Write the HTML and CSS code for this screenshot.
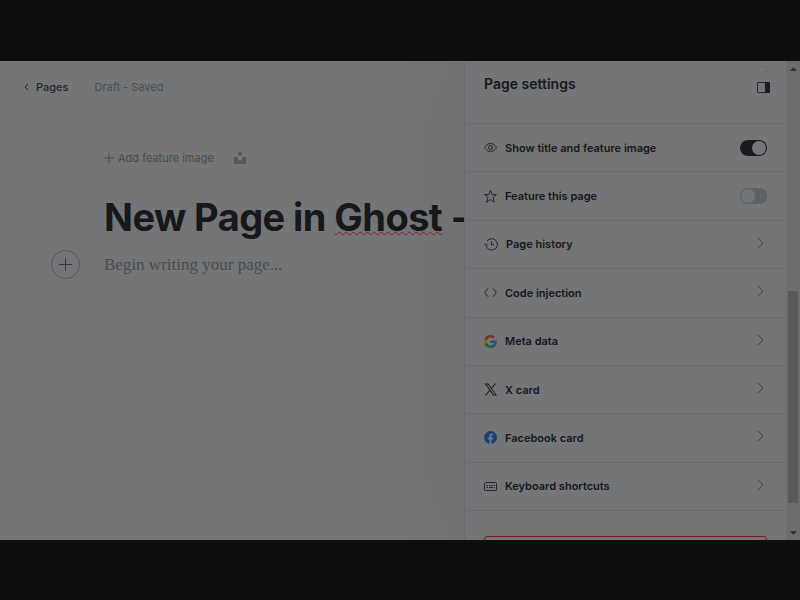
FILE: index.html
```html
<!DOCTYPE html>
<html lang="en">
<head>
<meta charset="utf-8">
<title>Page settings</title>
<link rel="stylesheet" href="styles.css">
</head>
<body>
<div class="app">
  <main class="editor">
    <header class="topbar">
      <a class="back" href="#"><svg width="5" height="8" viewBox="0 0 5 8"><path d="M4 1 1 4l3 3"/></svg>Pages</a>
      <span class="status">Draft - Saved</span>
    </header>
    <div class="canvas">
      <div class="feature">
        <button class="add-image" type="button"><svg width="10" height="10" viewBox="0 0 10 10"><path d="M5 0v10M0 5h10"/></svg>Add feature image</button>
        <button class="unsplash" type="button" aria-label="Unsplash"><svg width="12" height="12" viewBox="0 0 12 12"><path d="M4 0h4v3.500H4zM0 5h4v3.500h4V5h4v7H0z"/></svg></button>
      </div>
      <h1 class="title">New Page in <span class="misspelt">Ghost</span> -</h1>
      <div class="writer">
        <button class="plus" type="button" aria-label="Add a card"><svg width="13" height="13" viewBox="0 0 13 13"><path d="M6.500 0v13M0 6.500h13"/></svg></button>
        <input class="text" type="text" aria-label="Page content" placeholder="Begin writing your page...">
      </div>
    </div>
  </main>
  <aside class="panel">
    <header class="panel-head">
      <h2>Page settings</h2>
      <div class="panel-tools">
        <span class="corner"></span>
        <button class="sidebar-toggle" type="button" aria-label="Toggle settings"><svg width="13" height="11" viewBox="0 0 13 11"><rect x=".5" y=".5" width="12" height="10" rx=".5" fill="none" stroke="#27292c"/><path fill="#1b1d20" d="M8 0h5v11H8z"/></svg></button>
      </div>
    </header>
    <ul class="settings">
      <li><label class="row" for="show-title">
        <svg class="icon" viewBox="0 0 13 13"><path d="M.5 6.500C2 4 4 2.500 6.500 2.500S11 4 12.500 6.500C11 9 9 10.500 6.500 10.500S2 9 .5 6.500z"/><circle cx="6.500" cy="6.500" r="2"/><path d="M6.500 6.500h.8"/></svg>
        <span>Show title and feature image</span><input class="switch" id="show-title" type="checkbox" checked></label></li>
      <li><label class="row" for="feature">
        <svg class="icon" viewBox="0 0 13 13"><path d="m6.500.6 1.700 4h4.200L9.100 7.300l1.200 4.900-3.800-2.600-3.800 2.600 1.200-4.900L.6 4.600h4.200z"/></svg>
        <span>Feature this page</span><input class="switch" id="feature" type="checkbox"></label></li>
      <li><button class="row" type="button">
        <svg class="icon history" viewBox="0 0 14 13"><path d="M2.100 7.200A5.700 5.700 0 1 0 3 3.200M4.300 1.800l1.200-.7M.4 5.500l1.700 1.900 1.700-1.700M7.500 3.500v3.300H10"/></svg>
        <span>Page history</span><svg class="chevron" viewBox="0 0 7 12"><path d="m1 .8 5 5.200-5 5.200"/></svg></button></li>
      <li><button class="row" type="button">
        <svg class="icon" viewBox="0 0 13 13"><path d="M4 2.300.7 6.500 4 10.700M9 2.300l3.300 4.200L9 10.700"/></svg>
        <span>Code injection</span><svg class="chevron" viewBox="0 0 7 12"><path d="m1 .8 5 5.200-5 5.200"/></svg></button></li>
      <li><button class="row" type="button">
        <svg class="icon brand" viewBox="0 0 24 24"><path fill="#284f87" d="M23.500 12.300c0-.9-.1-1.500-.2-2.300H12v4.700h6.500c-.3 1.500-1.100 2.800-2.400 3.700v3h3.900c2.200-2.100 3.500-5.200 3.500-9.100z"/><path fill="#22623b" d="M12 24c3.200 0 6-1.100 8-2.900l-3.900-3c-1.100.7-2.500 1.200-4.100 1.200-3.100 0-5.800-2.100-6.700-5H1.200v3.100C3.200 21.300 7.300 24 12 24z"/><path fill="#80661c" d="M5.300 14.300a7.200 7.200 0 0 1 0-4.600V6.600h-4a12 12 0 0 0 0 10.800z"/><path fill="#832f2c" d="M12 4.700c1.800 0 3.300.6 4.600 1.800L20 3.100C17.900 1.200 15.200 0 12 0 7.300 0 3.200 2.700 1.200 6.600l4.100 3.100c.9-2.800 3.600-5 6.700-5z"/></svg>
        <span>Meta data</span><svg class="chevron" viewBox="0 0 7 12"><path d="m1 .8 5 5.200-5 5.200"/></svg></button></li>
      <li><button class="row" type="button">
        <svg class="icon brand" viewBox="0 0 24 24"><path fill="#1a1b1d" fill-rule="evenodd" d="M1 1h7l5.500 7.600L20.200 1h2.400l-8.100 9.200L24 23h-7.100l-6-8.200L3.700 23H1.300l8.600-9.700zm3.500 1.800L18 21.200h2.600L7.100 2.800z"/></svg>
        <span>X card</span><svg class="chevron" viewBox="0 0 7 12"><path d="m1 .8 5 5.200-5 5.200"/></svg></button></li>
      <li><button class="row" type="button">
        <svg class="icon brand" viewBox="0 0 24 24"><circle cx="12" cy="12" r="12" fill="#173f78"/><path fill="#737577" d="M10.100 23.900v-8.400H7V12h3.100V9.400c0-3 1.800-4.700 4.500-4.700 1.300 0 2.700.2 2.700.2v3h-1.500c-1.500 0-2 .9-2 1.900V12h3.400l-.5 3.500h-2.900v8.400z"/></svg>
        <span>Facebook card</span><svg class="chevron" viewBox="0 0 7 12"><path d="m1 .8 5 5.200-5 5.200"/></svg></button></li>
      <li><button class="row" type="button">
        <svg class="icon" viewBox="0 0 13 13"><rect x=".5" y="2.500" width="12" height="8" rx="1"/><path d="M2.500 5.500H4M5 5.500h1.500M7.500 5.500H9M10 5.500h1M2.500 7.500H4M5 7.500h4M10 7.500h1"/></svg>
        <span>Keyboard shortcuts</span><svg class="chevron" viewBox="0 0 7 12"><path d="m1 .8 5 5.200-5 5.200"/></svg></button></li>
    </ul>
    <button class="delete" type="button" aria-label="Delete page"></button>
  </aside>
  <div class="scrollbar">
    <svg width="7" height="4" viewBox="0 0 7 4"><path d="M0 4 3.500 0 7 4z"/></svg>
    <div class="track"><div class="thumb"></div></div>
    <svg width="7" height="4" viewBox="0 0 7 4"><path d="M0 0h7L3.500 4z"/></svg>
  </div>
</div>
</body>
</html>
```
FILE: styles.css
```css
* { box-sizing: border-box; }

body {
  margin: 0;
  height: 100vh;
  padding: 61px 0 60px;
  background: #0e0e0e;
  color: #16181c;
  font-family: Inter, "Liberation Sans", sans-serif;
}

button {
  margin: 0;
  padding: 0;
  border: 0;
  background: none;
  color: inherit;
  font: inherit;
  text-align: left;
}

h1, h2, ul { margin: 0; padding: 0; }
svg { display: block; flex: none; }

.app {
  display: grid;
  grid-template-columns: minmax(0, 1fr) 322px 14px;
  height: 100%;
  overflow: hidden;
  background: #737577;
}

.editor { min-width: 0; overflow: hidden; }

.topbar {
  display: flex;
  align-items: center;
  gap: 26px;
  height: 51px;
  padding-left: 24px;
  font-size: 11px;
}

.back {
  display: flex;
  align-items: center;
  gap: 7px;
  color: #232528;
  font-weight: 500;
  text-decoration: none;
}

.back svg, .add-image svg, .plus svg {
  fill: none;
  stroke: currentColor;
}

.status { color: #4a4e53; }

.canvas { padding: 38px 0 0 104px; }

.feature {
  display: flex;
  align-items: center;
  gap: 20px;
  height: 16px;
  color: #474b50;
  font-size: 11px;
}

.add-image { display: flex; align-items: center; gap: 4px; }
.unsplash { color: #55595d; }
.unsplash svg { fill: currentColor; }

.title {
  margin-top: 27px;
  font-size: 38px;
  line-height: 48px;
  font-weight: 700;
  letter-spacing: -0.015em;
  white-space: nowrap;
}

.misspelt {
  text-decoration: underline wavy #85222a 1px;
  text-decoration-skip-ink: none;
  text-underline-offset: 0;
}

.writer {
  display: flex;
  align-items: center;
  gap: 24px;
  margin: 9px 0 0 -53px;
}

.plus {
  display: grid;
  place-items: center;
  flex: none;
  width: 29px;
  height: 29px;
  border: 1px solid #54575b;
  border-radius: 50%;
  color: #36393d;
}

.text {
  flex: 1;
  min-width: 0;
  padding: 0;
  border: 0;
  outline: 0;
  background: none;
  font-family: "Liberation Serif", serif;
  font-size: 17px;
}

.text::placeholder { color: #484c51; opacity: 1; }

.panel {
  position: relative;
  overflow: hidden;
  height: 100%;
  border-left: 1px solid #696b6e;
  background: #737577;
  box-shadow: 0 0 100px rgba(0, 0, 0, 0.06);
}

.panel-head {
  display: flex;
  justify-content: space-between;
  height: 62px;
  padding: 5px 16px 0 19px;
}

.panel-head h2 {
  padding-top: 9px;
  font-size: 14px;
  line-height: 18px;
  font-weight: 600;
}

.panel-tools { display: grid; justify-items: end; align-content: start; gap: 9px; }

.corner {
  width: 10px;
  height: 7px;
  margin-right: 3px;
  border: solid #696b6e;
  border-width: 1px 1px 0 0;
}

.settings {
  display: grid;
  grid-auto-rows: 1fr;
  height: 388px;
  border-top: 1px solid #6a6c6f;
  list-style: none;
}

.row {
  display: flex;
  align-items: center;
  gap: 8px;
  width: 100%;
  height: 100%;
  padding: 0 19px;
  border-bottom: 1px solid #6a6c6f;
  font-size: 11px;
  font-weight: 600;
}

.row span { flex: 1; }

.icon {
  width: 13px;
  height: 13px;
  fill: none;
  stroke: #232528;
}

.history { width: 14px; }
.brand { stroke: none; }

.chevron {
  width: 7px;
  height: 12px;
  margin: 0 3px 3px 0;
  fill: none;
  stroke: #3e4247;
}

.switch {
  appearance: none;
  display: flex;
  width: 27px;
  height: 16px;
  margin: 0;
  padding: 1px;
  border-radius: 8px;
  background: #5d6165;
}

.switch::before {
  content: "";
  width: 14px;
  height: 14px;
  border-radius: 50%;
  background: #737577;
}

.switch:checked { justify-content: flex-end; background: #191b1e; }

.delete {
  display: block;
  width: calc(100% - 38px);
  height: 34px;
  margin: 25px 19px 0;
  border: 1px solid #7b1820;
  border-radius: 3px;
}

.scrollbar {
  position: relative;
  display: flex;
  flex-direction: column;
  align-items: center;
  padding: 6px 2px 5px;
  background: #6b6d6f;
}

.scrollbar svg { fill: #303133; }

.track { flex: 1; width: 100%; padding: 5px 0; }

.thumb {
  height: 47%;
  width: 100%;
  margin-top: 215px;
  background: #58595b;
}
```
